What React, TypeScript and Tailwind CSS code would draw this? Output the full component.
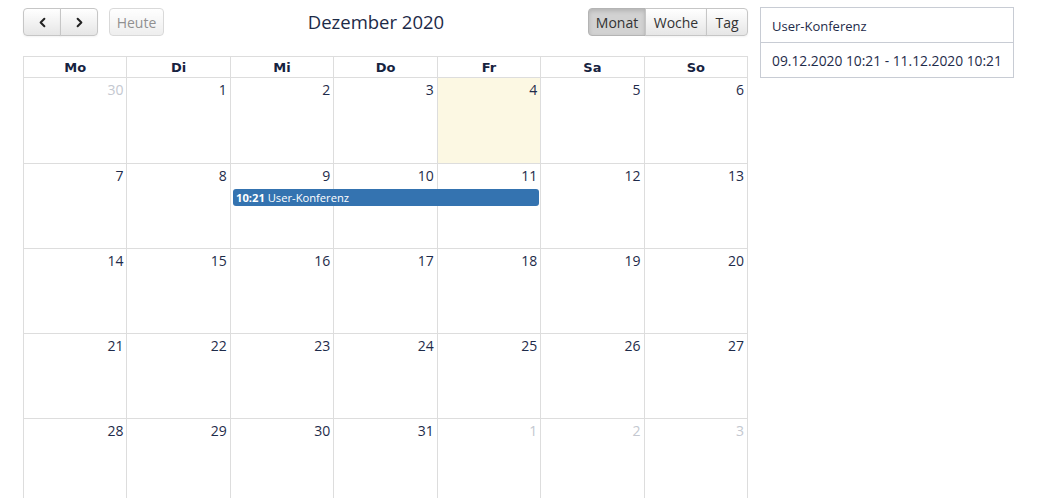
import React from 'react';
import { ChevronLeft, ChevronRight } from 'lucide-react';

type Day = { n: number; other?: boolean; today?: boolean };

const weeks: Day[][] = [
  [{ n: 30, other: true }, { n: 1 }, { n: 2 }, { n: 3 }, { n: 4, today: true }, { n: 5 }, { n: 6 }],
  [{ n: 7 }, { n: 8 }, { n: 9 }, { n: 10 }, { n: 11 }, { n: 12 }, { n: 13 }],
  [{ n: 14 }, { n: 15 }, { n: 16 }, { n: 17 }, { n: 18 }, { n: 19 }, { n: 20 }],
  [{ n: 21 }, { n: 22 }, { n: 23 }, { n: 24 }, { n: 25 }, { n: 26 }, { n: 27 }],
  [{ n: 28 }, { n: 29 }, { n: 30 }, { n: 31 }, { n: 1, other: true }, { n: 2, other: true }, { n: 3, other: true }],
];

const dayNames = ['Mo', 'Di', 'Mi', 'Do', 'Fr', 'Sa', 'So'];

const btn =
  'h-[28px] border border-[#c6c6c6] bg-gradient-to-b from-white to-[#e6e6e6] text-[#333] text-[14px] flex items-center justify-center shadow-[inset_0_1px_0_rgba(255,255,255,0.2),0_1px_2px_rgba(0,0,0,0.05)]';

const App = () => {
  return (
    <div className="w-[1038px] h-[498px] overflow-hidden bg-white flex items-start pl-[23px] pt-[7px] gap-[12px] font-['Open_Sans',sans-serif] text-[#1e2b4a]">
      <div className="w-[725px] shrink-0">
        {/* toolbar */}
        <div className="flex items-center justify-between h-[30px]">
          <div className="flex items-center gap-[11px]">
            <div className="flex">
              <button className={`${btn} w-[38px] rounded-l-[4px]`}>
                <ChevronLeft size={15} strokeWidth={3.2} className="text-[#222]" />
              </button>
              <button className={`${btn} w-[38px] -ml-px rounded-r-[4px]`}>
                <ChevronRight size={15} strokeWidth={3.2} className="text-[#222]" />
              </button>
            </div>
            <button className={`${btn} w-[55px] rounded-[4px] opacity-65 text-[#555] shadow-none`}>Heute</button>
          </div>
          <h2 className="text-[18.5px] leading-none text-[#1c2a47] mt-[1px]">Dezember 2020</h2>
          <div className="flex">
            <button className="h-[28px] w-[58px] border border-[#b4b4b4] rounded-l-[4px] bg-[#d2d2d2] text-[#333] text-[14px] shadow-[inset_0_2px_4px_rgba(0,0,0,0.15)]">
              Monat
            </button>
            <button className={`${btn} w-[62px] -ml-px`}>Woche</button>
            <button className={`${btn} w-[42px] -ml-px rounded-r-[4px]`}>Tag</button>
          </div>
        </div>

        {/* grid */}
        <div className="mt-[19px] border-l border-t border-[#ddd]">
          <div className="grid grid-cols-7">
            {dayNames.map((d) => (
              <div
                key={d}
                className="h-[21px] border-r border-b border-[#ddd] text-center text-[13px] leading-[21px] font-bold font-['DejaVu_Sans',sans-serif] text-[#17233f]"
              >
                {d}
              </div>
            ))}
          </div>
          {weeks.map((week, wi) => (
            <div key={wi} className="relative grid grid-cols-7">
              {week.map((d, di) => (
                <div
                  key={di}
                  className={`${wi === 0 ? 'h-[86px]' : 'h-[85px]'} border-r border-b border-[#ddd] text-right pr-[3px] pt-[2px] text-[14px] leading-[20px] ${
                    d.today ? 'bg-[#fcf8e3]' : ''
                  } ${d.other ? 'text-[#c4c8d0]' : 'text-[#1e2b4a]'}`}
                >
                  {d.n}
                </div>
              ))}
              {wi === 1 && (
                <div className="absolute top-[25px] left-[209px] w-[306px] h-[17px] rounded-[3px] bg-[#3473b0] text-white text-[11.2px] leading-[17px] pl-[3px] whitespace-nowrap">
                  <span className="font-bold">10:21</span> User-Konferenz
                </div>
              )}
            </div>
          ))}
        </div>
      </div>

      {/* side panel */}
      <div className="w-[254px] border border-[#c8ccd4] text-[13px] text-[#1e2b4a]">
        <div className="h-[35px] flex items-center px-[11px] pt-[3px] border-b border-[#c8ccd4]">User-Konferenz</div>
        <div className="h-[34px] flex items-center px-[11px] pt-[2px] text-[13.8px]">09.12.2020 10:21 - 11.12.2020 10:21</div>
      </div>
    </div>
  );
};

export default App;
